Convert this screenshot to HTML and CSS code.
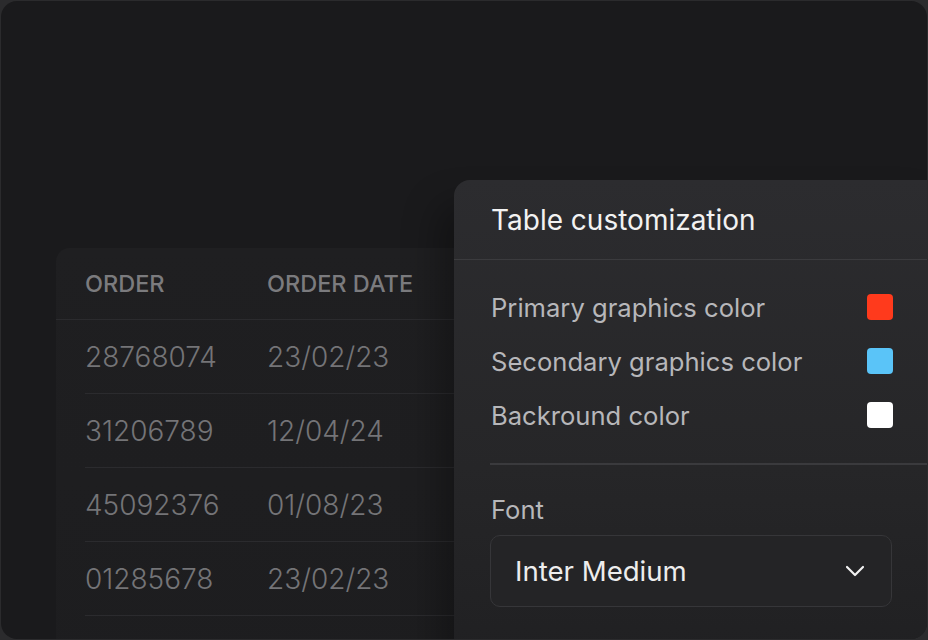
FILE: index.html
```html
<!DOCTYPE html>
<html>
<head>
<meta charset="utf-8">
<link rel="stylesheet" href="styles.css">
</head>
<body>
<div class="frame">
  <div class="table-card">
    <div class="thead">
      <div class="c1">ORDER</div>
      <div class="c2">ORDER DATE</div>
    </div>
    <div class="row"><div class="c1">28768074</div><div class="c2">23/02/23</div></div>
    <div class="row"><div class="c1">31206789</div><div class="c2">12/04/24</div></div>
    <div class="row"><div class="c1">45092376</div><div class="c2">01/08/23</div></div>
    <div class="row"><div class="c1">01285678</div><div class="c2">23/02/23</div></div>
  </div>
  <div class="panel">
    <div class="panel-head">Table customization</div>
    <div class="colors">
      <div class="color-row"><span>Primary graphics color</span><span class="swatch red"></span></div>
      <div class="color-row"><span>Secondary graphics color</span><span class="swatch blue"></span></div>
      <div class="color-row"><span>Backround color</span><span class="swatch white"></span></div>
    </div>
    <div class="divider"></div>
    <div class="font-block">
      <div class="font-label">Font</div>
      <div class="select">
        <span>Inter Medium</span>
        <svg width="20" height="12" viewBox="0 0 20 12"><path d="M2 2 L10 10 L18 2" fill="none" stroke="#f2f2f2" stroke-width="2.2" stroke-linecap="round" stroke-linejoin="round"/></svg>
      </div>
    </div>
  </div>
</div>
</body>
</html>
```
FILE: styles.css
```css
html, body {
  margin: 0;
  padding: 0;
  background: #2b2b2d;
  font-family: Inter, "Noto Sans", sans-serif;
}
.frame {
  position: relative;
  margin: 1px;
  height: 638px;
  border-radius: 16px;
  background: #1a1a1c;
  overflow: hidden;
  padding: 247px 0 0 55px;
  box-sizing: border-box;
}
.table-card {
  width: 520px;
  height: 460px;
  border-radius: 14px;
  background: linear-gradient(180deg, #1f1f21 0%, #1d1d1f 100%);
}
.thead {
  display: flex;
  align-items: center;
  height: 72px;
  box-sizing: border-box;
  padding-left: 29px;
  border-bottom: 1px solid #2b2b2e;
  font-size: 23.5px;
  font-weight: 500;
  color: #7b7b7e;
}
.c1 { width: 182px; }
.row {
  display: flex;
  align-items: center;
  height: 74px;
  box-sizing: border-box;
  margin-left: 29px;
  border-bottom: 1px solid #2b2b2e;
  font-size: 28px;
  font-weight: 300;
  color: #747477;
}
.panel {
  position: absolute;
  left: 453px;
  top: 179px;
  width: 490px;
  height: 480px;
  border-radius: 16px;
  background: linear-gradient(180deg, #2c2c2f 0%, #262628 60%, #202022 100%);
  box-shadow: -16px 24px 36px rgba(0,0,0,0.3);
}
.panel-head {
  height: 80px;
  display: flex;
  align-items: center;
  padding-left: 37px;
  border-bottom: 1px solid #3b3b3e;
  box-sizing: border-box;
  font-size: 28px;
  color: #f2f2f2;
}
.colors {
  width: 402px;
  margin-left: 37px;
  padding-top: 20px;
}
.color-row {
  height: 54px;
  display: flex;
  align-items: center;
  justify-content: space-between;
  font-size: 25.6px;
  color: #b7b7ba;
}
.swatch {
  width: 26px;
  height: 26px;
  border-radius: 4px;
}
.red { background: #ff3a1c; }
.blue { background: #5ac4f8; }
.white { background: #ffffff; }
.divider {
  margin: 21px 0 0 36px;
  height: 2px;
  background: #3a3a3d;
}
.font-block {
  width: 402px;
  margin-left: 36px;
  padding-top: 30px;
}
.font-label {
  height: 30px;
  line-height: 30px;
  font-size: 25.6px;
  color: #b7b7ba;
  padding-left: 1px;
}
.select {
  margin-top: 10px;
  height: 72px;
  box-sizing: border-box;
  border: 1px solid #363639;
  border-radius: 10px;
  background: #242426;
  display: flex;
  align-items: center;
  justify-content: space-between;
  padding: 0 26px 0 24px;
  font-size: 27.6px;
  color: #ededed;
}
```
